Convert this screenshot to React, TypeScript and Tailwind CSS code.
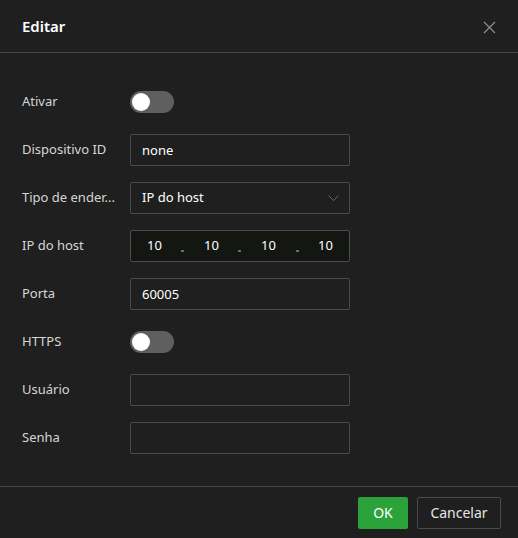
import React, { useState } from "react";

const font = { fontFamily: '"Noto Sans", "Open Sans", sans-serif' };

const Toggle: React.FC<{ on: boolean; onChange: (v: boolean) => void }> = ({ on, onChange }) => (
  <button
    onClick={() => onChange(!on)}
    className={`w-[44px] h-[22px] rounded-full p-[2px] flex items-center ${on ? "bg-[#2ba33a] justify-end" : "bg-[#5f5f5f] justify-start"}`}
  >
    <span className="w-[18px] h-[18px] rounded-full bg-white" />
  </button>
);

const Row: React.FC<{ label: string; children: React.ReactNode }> = ({ label, children }) => (
  <div className="flex items-center h-[48px]">
    <div className="w-[100px] mr-[8px] whitespace-nowrap text-[13px] text-[#d6d6d6]">{label}</div>
    {children}
  </div>
);

const inputCls =
  "w-[220px] h-[32px] bg-[#1f1f1f] border border-[#4a4a50] rounded-[2px] px-[11px] text-[13px] text-white outline-none";

export default function App() {
  const [ativar, setAtivar] = useState(false);
  const [https, setHttps] = useState(false);
  const [id, setId] = useState("none");
  const [porta, setPorta] = useState("60005");
  const [user, setUser] = useState("");
  const [senha, setSenha] = useState("");
  const ip = ["10", "10", "10", "10"];

  return (
    <div className="w-[518px] h-[538px] bg-[#1f1f1f] flex flex-col" style={font}>
      {/* Header */}
      <div className="h-[53px] flex items-center justify-between px-[22px] border-b border-[#45454c]">
        <h1 className="text-[15px] font-semibold text-white">Editar</h1>
        <svg width="13" height="13" viewBox="0 0 13 13" className="mt-[2px]">
          <path d="M1 1L12 12M12 1L1 12" stroke="#8c8c8c" strokeWidth="1.3" />
        </svg>
      </div>

      {/* Body */}
      <div className="flex-1 pt-[25px] px-[22px]">
        <Row label="Ativar">
          <Toggle on={ativar} onChange={setAtivar} />
        </Row>
        <Row label="Dispositivo ID">
          <input className={inputCls} value={id} onChange={(e) => setId(e.target.value)} />
        </Row>
        <Row label="Tipo de ender...">
          <div className={`${inputCls} flex items-center justify-between pr-[10px]`}>
            <span>IP do host</span>
            <svg width="11" height="7" viewBox="0 0 11 7">
              <path d="M0.5 0.5L5.5 5.5L10.5 0.5" stroke="#6a6a6a" strokeWidth="1" fill="none" />
            </svg>
          </div>
        </Row>
        <Row label="IP do host">
          <div className="w-[220px] h-[32px] bg-[#141611] border border-[#4a4a50] rounded-[2px] px-[16px] flex items-center justify-between text-[13px] text-white">
            {ip.map((seg, i) => (
              <React.Fragment key={i}>
                <span>{seg}</span>
                {i < 3 && <span className="w-[3px] h-[2px] mt-[10px] bg-[#6a6a6a]" />}
              </React.Fragment>
            ))}
          </div>
        </Row>
        <Row label="Porta">
          <input className={inputCls} value={porta} onChange={(e) => setPorta(e.target.value)} />
        </Row>
        <Row label="HTTPS">
          <Toggle on={https} onChange={setHttps} />
        </Row>
        <Row label="Usuário">
          <input className={inputCls} value={user} onChange={(e) => setUser(e.target.value)} />
        </Row>
        <Row label="Senha">
          <input type="password" className={inputCls} value={senha} onChange={(e) => setSenha(e.target.value)} />
        </Row>
      </div>

      {/* Footer */}
      <div className="h-[52px] border-t border-[#45454c] flex items-center justify-end gap-[9px] pr-[17px]">
        <button className="w-[50px] h-[32px] bg-[#2ba33a] rounded-[2px] text-[14px] text-white">OK</button>
        <button className="w-[84px] h-[32px] border border-[#4a4a50] rounded-[2px] text-[14px] text-[#e6e6e6]">
          Cancelar
        </button>
      </div>
    </div>
  );
}
